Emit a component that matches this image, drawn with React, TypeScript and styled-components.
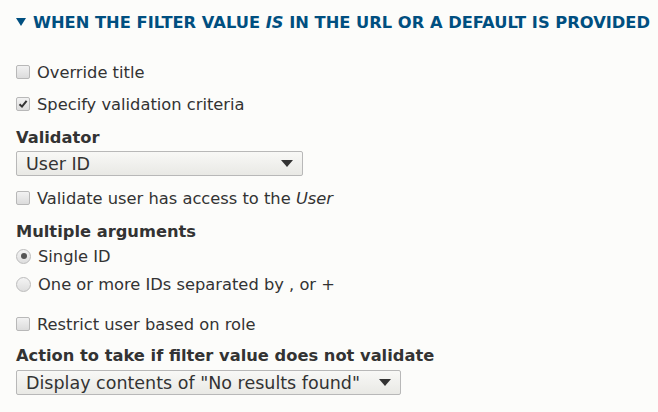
import React from 'react';
import styled, { createGlobalStyle } from 'styled-components';

const GlobalStyle = createGlobalStyle`
  html, body {
    margin: 0;
    padding: 0;
    background: #fcfcfa;
  }
  body {
    font-family: "DejaVu Sans", "Noto Sans", sans-serif;
    color: #333;
  }
`;

const Panel = styled.div`
  width: 658px;
  height: 412px;
  padding: 11px 16px 0 16px;
  box-sizing: border-box;
  display: flex;
  flex-direction: column;
`;

const Summary = styled.div`
  display: flex;
  align-items: center;
  gap: 7px;
  color: #004f80;
  font-size: 16.3px;
  font-weight: bold;
  text-transform: uppercase;
  white-space: nowrap;
  height: 22px;
  margin-bottom: 28px;
`;

const Caret = styled.span`
  width: 0;
  height: 0;
  border-left: 5px solid transparent;
  border-right: 5px solid transparent;
  border-top: 8px solid #004f80;
  flex: none;
`;

const Row = styled.label<{ $top: number }>`
  display: flex;
  align-items: center;
  gap: 7px;
  font-size: 16.3px;
  height: 22px;
  margin-top: ${({ $top }) => $top}px;
  white-space: nowrap;
`;

const Box = styled.span`
  width: 12px;
  height: 12px;
  border: 1px solid #b8b8b8;
  border-radius: 2px;
  background: linear-gradient(#f2f2f2, #dcdcdc);
  position: relative;
  flex: none;
`;

const Round = styled.span`
  width: 13px;
  height: 13px;
  border: 1px solid #bcbcbc;
  border-radius: 50%;
  background: linear-gradient(#f4f4f4, #dedede);
  display: flex;
  align-items: center;
  justify-content: center;
  flex: none;
`;

const Dot = styled.span`
  width: 6px;
  height: 6px;
  border-radius: 50%;
  background: #555;
`;

const FieldLabel = styled.div<{ $top: number }>`
  font-size: 16.3px;
  font-weight: bold;
  height: 20px;
  line-height: 20px;
  margin-top: ${({ $top }) => $top}px;
  white-space: nowrap;
`;

const Select = styled.div<{ $width: number; $top: number }>`
  width: ${({ $width }) => $width}px;
  height: 25px;
  box-sizing: border-box;
  border: 1px solid #b8b8b8;
  border-radius: 2px;
  background: linear-gradient(#f8f8f6, #e9e9e5);
  display: flex;
  align-items: center;
  justify-content: space-between;
  padding: 0 9px 0 9px;
  font-size: 17.5px;
  color: #333;
  margin-top: ${({ $top }) => $top}px;
  white-space: nowrap;
`;

const SelectArrow = styled.span`
  width: 0;
  height: 0;
  border-left: 6px solid transparent;
  border-right: 6px solid transparent;
  border-top: 7px solid #333;
  flex: none;
`;

const CheckMark = styled.svg`
  position: absolute;
  left: 0;
  top: 0;
`;

const CheckBox: React.FC<{ checked?: boolean }> = ({ checked }) => (
  <Box>
    {checked && (
      <CheckMark width="12" height="12" viewBox="0 0 12 12">
        <path d="M2.5 6.2 L5 8.6 L9.6 2.8" fill="none" stroke="#333" strokeWidth="2" />
      </CheckMark>
    )}
  </Box>
);

const App: React.FC = () => (
  <>
    <GlobalStyle />
    <Panel>
      <Summary>
        <Caret />
        <span>
          When the filter value <i>is</i> in the URL or a default is provided
        </span>
      </Summary>
      <Row $top={0}>
        <CheckBox />
        Override title
      </Row>
      <Row $top={10}>
        <CheckBox checked />
        Specify validation criteria
      </Row>
      <FieldLabel $top={13}>Validator</FieldLabel>
      <Select $width={287} $top={3}>
        <span>User ID</span>
        <SelectArrow />
      </Select>
      <Row $top={11}>
        <CheckBox />
        <span>
          Validate user has access to the <i>User</i>
        </span>
      </Row>
      <FieldLabel $top={13}>Multiple arguments</FieldLabel>
      <Row $top={3}>
        <Round>
          <Dot />
        </Round>
        Single ID
      </Row>
      <Row $top={6}>
        <Round />
        One or more IDs separated by , or +
      </Row>
      <Row $top={18}>
        <CheckBox />
        Restrict user based on role
      </Row>
      <FieldLabel $top={11}>Action to take if filter value does not validate</FieldLabel>
      <Select $width={385} $top={4}>
        <span>Display contents of "No results found"</span>
        <SelectArrow />
      </Select>
    </Panel>
  </>
);

export default App;
